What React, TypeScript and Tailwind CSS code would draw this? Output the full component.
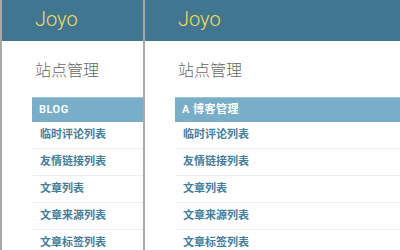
import React from "react";

const rows = ["临时评论列表", "友情链接列表", "文章列表", "文章来源列表", "文章标签列表"];

function AdminPane({ caption, className }: { caption: string; className: string }) {
  return (
    <div className={`overflow-hidden border-l-2 border-[#a9a9a9] ${className}`}>
      <div className="w-[400px]">
        <div className="h-[41px] bg-[#417690] pl-[33px] pt-[7px]">
          <h1 className="text-[20px] leading-[24px] font-light text-[#f5dd5d]">Joyo</h1>
        </div>
        <div className="pl-[30px]">
          <h2 className="mt-[20px] pl-[3px] text-[16px] leading-[20px] font-light text-[#666]">站点管理</h2>
          <div className="mt-[16px]">
            <div className="h-[25px] flex items-center bg-[#79aec8] border-t border-[#9cc4d8] pl-[7px] text-[11px] tracking-[0.5px] uppercase font-semibold text-white">
              {caption}
            </div>
            {rows.map(r => (
              <div key={r} className="h-[27px] flex items-center border-b border-[#eeeeee] ml-[1px] pl-[7px] text-[11px] font-semibold text-[#447e9b]">
                {r}
              </div>
            ))}
          </div>
        </div>
      </div>
    </div>
  );
}

export default function App() {
  return (
    <div
      className="flex w-[400px] h-[250px] overflow-hidden bg-white"
      style={{ fontFamily: 'Roboto, "Noto Sans CJK SC", sans-serif' }}
    >
      <AdminPane caption="Blog" className="w-[143px] shrink-0" />
      <AdminPane caption="A 博客管理" className="flex-1" />
    </div>
  );
}
